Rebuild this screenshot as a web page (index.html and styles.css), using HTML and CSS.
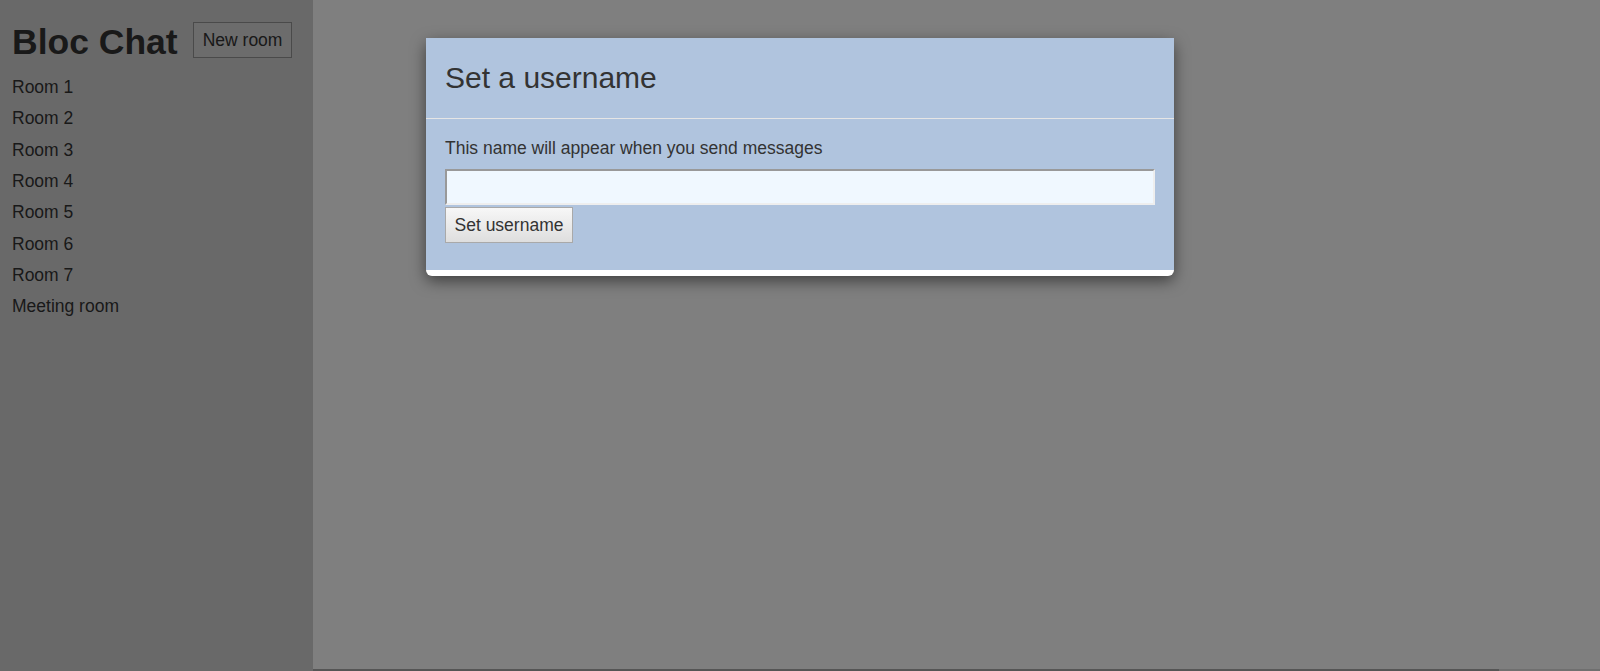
FILE: index.html
```html
<!DOCTYPE html>
<html lang="en">
<head>
<meta charset="utf-8">
<title>Bloc Chat</title>
<link rel="stylesheet" href="styles.css">
</head>
<body>
<div class="app">
  <aside class="sidebar">
    <div class="sidebar-head">
      <h1 class="brand">Bloc Chat</h1>
      <button class="btn btn-new" type="button">New room</button>
    </div>
    <ul class="rooms">
      <li>Room 1</li>
      <li>Room 2</li>
      <li>Room 3</li>
      <li>Room 4</li>
      <li>Room 5</li>
      <li>Room 6</li>
      <li>Room 7</li>
      <li>Meeting room</li>
    </ul>
  </aside>
  <main class="main">
    <div class="messages"></div>
    <form class="composer">
      <input class="composer-input" type="text">
      <button class="composer-send" type="button" aria-label="Send"></button>
    </form>
  </main>
</div>
<div class="backdrop"></div>
<div class="modal">
  <div class="modal-content">
    <div class="modal-header">
      <h3 class="modal-title">Set a username</h3>
    </div>
    <div class="modal-body">
      <p class="modal-text">This name will appear when you send messages</p>
      <input class="name-input" type="text">
      <button class="btn btn-set" type="button">Set username</button>
    </div>
  </div>
</div>
</body>
</html>
```

FILE: styles.css
```css
html, body {
  margin: 0;
  padding: 0;
}
body {
  font-family: "Liberation Sans", Arial, sans-serif;
  font-size: 17.5px;
  color: #333;
  background: #fff;
  overflow: hidden;
}
.app {
  display: flex;
  align-items: flex-start;
}
.sidebar {
  width: 313px;
  flex: none;
  height: 100vh;
  background: #d3d3d3;
  padding: 22px 0 0 12px;
  box-sizing: border-box;
}
.sidebar-head {
  display: flex;
  align-items: flex-start;
}
.brand {
  margin: 0;
  font-size: 35.5px;
  line-height: 40px;
  font-weight: bold;
  color: #333;
}
.btn {
  font-family: "Liberation Sans", Arial, sans-serif;
  font-size: 17.5px;
  color: #333;
  height: 36px;
  padding: 0 8.5px;
  margin: 0;
  box-sizing: border-box;
  border-radius: 0;
}
.btn-new {
  margin-left: 15.5px;
  border: 1px solid #949494;
  background: #d8d8d8;
}
.rooms {
  list-style: none;
  margin: 10px 0 0;
  padding: 0;
}
.rooms li {
  line-height: 31.34px;
}
.main {
  flex: 1;
  display: flex;
  flex-direction: column;
}
.messages {
  height: 669px;
  flex: none;
}
.composer {
  display: flex;
  margin: 0;
}
.composer-input {
  flex: 1;
  height: 36px;
  box-sizing: border-box;
  border: 2px solid #aaa;
  margin: 0;
}
.composer-send {
  width: 101px;
  height: 36px;
  border: 1px solid #dedede;
  background: #e0e0e0;
  margin: 0;
}
.backdrop {
  position: fixed;
  inset: 0;
  background: rgba(0, 0, 0, 0.5);
}
.modal {
  position: fixed;
  top: 38px;
  left: 0;
  right: 0;
  display: flex;
  justify-content: center;
}
.modal-content {
  width: 748px;
  background: #fff;
  border-radius: 6px;
  padding-bottom: 6px;
  box-shadow: 0 5px 15px rgba(0, 0, 0, 0.5);
}
.modal-header {
  background: #b0c4de;
  padding: 23px 19px 24px;
  border-bottom: 1px solid #e5e5e5;
}
.modal-title {
  margin: 0;
  font-size: 30px;
  line-height: 33px;
  font-weight: normal;
  color: #333;
}
.modal-body {
  background: #b0c4de;
  padding: 17px 19px 27px;
}
.modal-text {
  margin: 0 0 8px;
  line-height: 25px;
}
.name-input {
  display: block;
  width: 100%;
  height: 36px;
  box-sizing: border-box;
  margin: 0 0 2px;
  border-style: solid;
  border-width: 2px;
  border-color: #999 #eee #eee #999;
  background: #f0f8ff;
  font-size: 17.5px;
}
.btn-set {
  display: block;
  border: 1px solid #a9a9a9;
  background: linear-gradient(#f7f7f7, #dedede);
}
```
